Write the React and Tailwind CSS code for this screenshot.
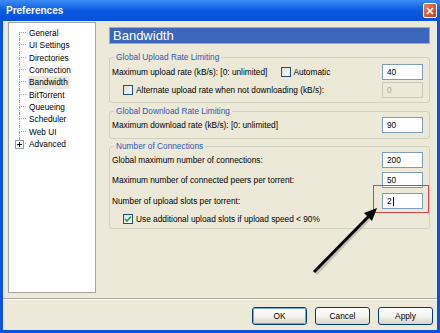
import { Fragment } from 'react'

const font = { fontFamily: '"Liberation Sans", Arial, sans-serif' }

const treeItems = ['General', 'UI Settings', 'Directories', 'Connection', 'Bandwidth', 'BitTorrent', 'Queueing', 'Scheduler', 'Web UI', 'Advanced']

function Check({ checked }) {
  return (
    <span className="relative flex h-[10px] w-[10px] shrink-0 items-center justify-center border border-[#1c5180] bg-linear-to-br from-[#dcdcd6] to-white">
      {checked && (
        <svg width="8" height="8" viewBox="0 0 8 8">
          <path d="M1 4 L3 6 L7 1.5" fill="none" stroke="#21a121" strokeWidth="1.6" />
        </svg>
      )}
    </span>
  )
}

function Field({ value, disabled }) {
  return (
    <div
      className={
        'flex h-[16px] w-[41px] items-center border pl-[4px] text-[8.3px] ' +
        (disabled ? 'border-[#c9c7ba] bg-[#ece9d8] text-[#aca899]' : 'border-[#7f9db9] bg-white text-black')
      }
    >
      {value}
    </div>
  )
}

function Group({ title, className, children }) {
  return (
    <fieldset className={'rounded-[3px] border border-[#d0d0bf] ' + className}>
      <legend className="ml-[4px] px-[2px] text-[8.3px] leading-[10px] text-[#2f55b8]">{title}</legend>
      <div className="pl-[2px] pr-[6px]">{children}</div>
    </fieldset>
  )
}

function Button({ label, primary }) {
  return (
    <div className="flex h-[18px] w-[55px] items-center justify-center rounded-[3px] border border-[#003c74] bg-linear-to-b from-white via-[#f3f3ef] to-[#d9d4c8]">
      <div className={'flex h-full w-full items-center justify-center rounded-[2px] text-[8.3px] ' + (primary ? 'border border-[#7aa3ec]' : '')}>
        {label}
      </div>
    </div>
  )
}

export default function App() {
  return (
    <div className="relative flex h-[333px] w-[440px] flex-col bg-[#0c50e0] px-[3px] pb-[3px]" style={font}>
      {/* title bar */}
      <div className="-mx-[3px] flex h-[21px] items-center justify-between bg-linear-to-b from-[#3b8cf5] via-[#0a5ae2] to-[#0552d8] pl-[6px] pr-[3px]">
        <span className="text-[10px] font-bold text-white">Preferences</span>
        <div className="flex h-[15px] w-[14px] items-center justify-center rounded-[2px] border border-white bg-linear-to-br from-[#e88060] to-[#c73d18]">
          <svg width="8" height="8" viewBox="0 0 8 8">
            <path d="M1 1 L7 7 M7 1 L1 7" stroke="white" strokeWidth="1.6" />
          </svg>
        </div>
      </div>

      <div className="flex flex-1 flex-col bg-[#ece9d8]">
        <div className="mt-[1px] flex">
          {/* tree */}
          <div className="ml-[5px] h-[271px] w-[88px] border border-[#a5a5a0] bg-white pt-[4px]">
            {treeItems.map((item, i) => (
              <div key={item} className="flex h-[12.33px] items-stretch text-[8.3px]">
                <div className="relative ml-[10px] flex w-[7px] flex-col">
                  <div className={'h-1/2 border-b border-dotted border-[#a0a0a0] ' + (i > 0 ? 'border-l' : 'border-l-0')} />
                  <div className={'h-1/2 border-dotted border-[#a0a0a0] ' + (i < treeItems.length - 1 ? 'border-l' : '')} />
                  {item === 'Advanced' && (
                    <div className="absolute left-[-4px] top-[2px] flex h-[9px] w-[9px] items-center justify-center border border-[#919b9c] bg-white">
                      <svg width="5" height="5" viewBox="0 0 5 5">
                        <path d="M0 2.5 H5 M2.5 0 V5" stroke="#000" strokeWidth="1" />
                      </svg>
                    </div>
                  )}
                </div>
                <span className={'ml-[2px] flex items-center px-[1px] ' + (item === 'Bandwidth' ? 'bg-[#e8e6df]' : '')}>{item}</span>
              </div>
            ))}
          </div>

          {/* right panel */}
          <div className="ml-[13px] flex w-[321px] flex-col">
            <div className="mt-[5px] flex h-[17px] items-center border border-[#8fa9de] bg-[#3c66bb] pl-[3px] text-[13px] text-white">
              Bandwidth
            </div>

            <Group title="Global Upload Rate Limiting" className="mt-[8px] pb-[4px]">
              <div className="mt-[2px] flex h-[16px] items-center text-[8.3px]">
                <span>Maximum upload rate (kB/s): [0: unlimited]</span>
                <span className="ml-[14px] flex items-center gap-[2px]">
                  <Check />
                  Automatic
                </span>
                <div className="ml-auto">
                  <Field value="40" />
                </div>
              </div>
              <div className="mt-[2px] flex h-[16px] items-center text-[8.3px]">
                <span className="ml-[11px] flex items-center gap-[3px]">
                  <Check />
                  Alternate upload rate when not downloading (kB/s):
                </span>
                <div className="ml-auto">
                  <Field value="0" disabled />
                </div>
              </div>
            </Group>

            <Group title="Global Download Rate Limiting" className="mt-[3px] pb-[5px]">
              <div className="mt-[1px] flex h-[16px] items-center text-[8.3px]">
                <span>Maximum download rate (kB/s): [0: unlimited]</span>
                <div className="ml-auto">
                  <Field value="90" />
                </div>
              </div>
            </Group>

            <Group title="Number of Connections" className="mt-[2px] pb-[3px]">
              <div className="mt-[1px] flex h-[16px] items-center text-[8.3px]">
                <span>Global maximum number of connections:</span>
                <div className="ml-auto">
                  <Field value="200" />
                </div>
              </div>
              <div className="mt-[4px] flex h-[16px] items-center text-[8.3px]">
                <span>Maximum number of connected peers per torrent:</span>
                <div className="ml-auto">
                  <Field value="50" />
                </div>
              </div>
              <div className="mt-[5px] flex h-[16px] items-center text-[8.3px]">
                <span>Number of upload slots per torrent:</span>
                <div className="relative ml-auto">
                  <Field value={<Fragment>2<span className="ml-[1px] inline-block h-[9px] w-[1px] bg-black align-middle" /></Fragment>} />
                  <div className="absolute -bottom-[4px] -left-[9px] -right-[6px] -top-[8px] border border-[#d04545]" />
                </div>
              </div>
              <div className="mt-[4px] flex h-[12px] items-center text-[8.3px]">
                <span className="ml-[11px] flex items-center gap-[3px]">
                  <Check checked />
                  Use additional upload slots if upload speed &lt; 90%
                </span>
              </div>
            </Group>
          </div>
        </div>

        {/* separator */}
        <div className="mt-[5px] h-[2px] border-b border-t border-b-white border-t-[#aca899]" />

        <div className="mt-[7px] flex justify-end gap-[8px] pr-[4px]">
          <Button label="OK" primary />
          <Button label="Cancel" />
          <Button label="Apply" />
        </div>
      </div>

      {/* annotation arrow */}
      <svg className="pointer-events-none absolute inset-0" width="440" height="333">
        <line x1="316" y1="274" x2="369" y2="219" stroke="#9a9a9a" strokeWidth="3" opacity="0.5" />
        <line x1="314" y1="272" x2="369" y2="216" stroke="#000" strokeWidth="3" />
        <polygon points="377,208 372,221 364,213" fill="#000" />
      </svg>
    </div>
  )
}
